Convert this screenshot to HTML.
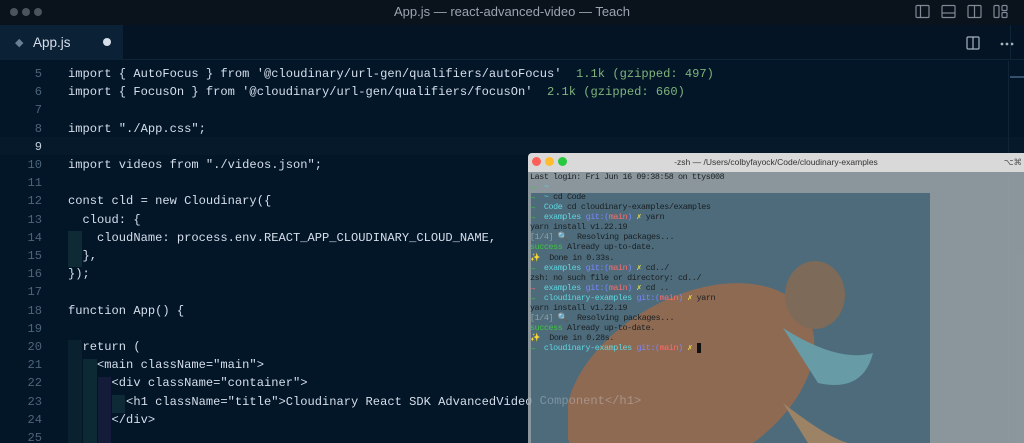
<!DOCTYPE html>
<html><head><meta charset="utf-8"><style>
*{margin:0;padding:0;box-sizing:border-box}
html,body{width:1024px;height:443px;overflow:hidden}
body{background:#021628;font-family:"Liberation Sans",sans-serif;position:relative}
.title{position:absolute;left:0;top:0;width:1024px;height:25px;background:#0a121c;color:#9aa5b1;font-size:13px;text-align:center;line-height:24px}
.dots span{position:absolute;top:8px;width:8px;height:8px;border-radius:50%;background:#4b535c}
.tabs{position:absolute;top:25px;left:0;width:1024px;height:35px;background:#041424;border-bottom:1px solid #0f2436}
.tab{position:absolute;left:0;top:0;width:123px;height:35px;background:#0b2236;color:#d6deeb;font-size:13.5px;line-height:36px;padding-left:33px}
.code{position:absolute;left:0;top:67px;width:1000px;height:376px;overflow:hidden;font-family:"Liberation Mono",monospace;font-size:12.1px;color:#d6deeb}
.ln{position:absolute;left:0;width:42px;text-align:right;color:#4d6479;white-space:pre}
.tx{position:absolute;left:68px;white-space:pre}
.g{color:#7fb37a}
.term{position:absolute;left:528px;top:153px;width:496px;height:290px;background:rgba(150,160,166,.93);border-radius:4px 0 0 0;overflow:hidden}
.tt{height:19px;background:#d9d9d9;color:#333;font-size:8.5px;text-align:center;line-height:18px;border-radius:4px 0 0 0}
.tt span{position:absolute;top:4px;width:9px;height:9px;border-radius:50%}
.tb{position:absolute;left:3px;top:40px;width:399px;height:250px;background:#4d6b7b}
.tl{position:absolute;left:2px;top:19px;font-family:"Liberation Mono",monospace;font-size:8.4px;line-height:10.06px;color:#1a1f22;white-space:pre;letter-spacing:-.4px}
.c{color:#5ed6e0}.b{color:#7b86ff}.r{color:#ff6b6b}.y{color:#e6d84a}.s{color:#3fc43f}.gr{color:#93a0a8}
</style></head><body>
<div class="title">App.js — react-advanced-video — Teach
<div class="dots"><span style="left:10px"></span><span style="left:22px"></span><span style="left:34px"></span></div>
<svg style="position:absolute;left:915px;top:4px" width="105" height="16" fill="none" stroke="#7f8a96" stroke-width="1.2">
<rect x="1" y="1.5" width="13" height="12" rx="1"/><line x1="5.5" y1="1.5" x2="5.5" y2="13.5"/>
<rect x="27" y="1.5" width="13" height="12" rx="1"/><line x1="27" y1="9" x2="40" y2="9"/>
<rect x="53" y="1.5" width="13" height="12" rx="1"/><line x1="59.5" y1="1.5" x2="59.5" y2="13.5"/>
<rect x="79" y="1.5" width="5" height="12" rx="1"/><rect x="87" y="1.5" width="5" height="5" rx="1"/><rect x="87" y="8.5" width="5" height="5" rx="1"/></svg>
</div>
<div class="tabs"><div class="tab"><span style="position:absolute;left:15px;top:0;color:#6a7f93;font-size:11px">◆</span>App.js<span style="position:absolute;left:103px;top:13px;width:8px;height:8px;border-radius:50%;background:#d6deeb"></span></div>
<svg style="position:absolute;left:966px;top:11px" width="50" height="14" fill="none" stroke="#a7b2bd" stroke-width="1.2"><rect x="1" y="1" width="12" height="12" rx="1"/><line x1="7" y1="1" x2="7" y2="13"/><circle cx="36" cy="8" r=".8" fill="#a7b2bd"/><circle cx="41" cy="8" r=".8" fill="#a7b2bd"/><circle cx="46" cy="8" r=".8" fill="#a7b2bd"/></svg>
<div style="position:absolute;left:1010px;top:0;width:1px;height:35px;background:#0f2436"></div></div>
<div style="position:absolute;left:0;top:137px;width:1024px;height:18px;background:#06192b"></div>
<div style="position:absolute;left:1008px;top:61px;width:16px;height:382px;border-left:1px solid #0f2436"></div>
<div style="position:absolute;left:1010px;top:76px;width:14px;height:2px;background:#34506a"></div>
<div style="position:absolute;left:68px;top:231px;width:14px;height:36px;background:#0d2a35"></div>
<div style="position:absolute;left:68px;top:340px;width:14px;height:103px;background:#0a2230"></div>
<div style="position:absolute;left:83px;top:359px;width:14px;height:84px;background:#0c2a33"></div>
<div style="position:absolute;left:98px;top:377px;width:13px;height:66px;background:#141c3a"></div>
<div style="position:absolute;left:112px;top:395px;width:13px;height:18px;background:#0e2a37"></div>
<div class="code">
<div class="ln" style="top:0">5</div><div class="tx" style="top:0">import { AutoFocus } from '@cloudinary/url-gen/qualifiers/autoFocus'  <span class="g">1.1k (gzipped: 497)</span></div>
<div class="ln" style="top:18.2px">6</div><div class="tx" style="top:18.2px">import { FocusOn } from '@cloudinary/url-gen/qualifiers/focusOn'  <span class="g">2.1k (gzipped: 660)</span></div>
<div class="ln" style="top:36.4px">7</div>
<div class="ln" style="top:54.6px">8</div><div class="tx" style="top:54.6px">import "./App.css";</div>
<div class="ln" style="top:72.8px;color:#c5d0db">9</div>
<div class="ln" style="top:91px">10</div><div class="tx" style="top:91px">import videos from "./videos.json";</div>
<div class="ln" style="top:109.2px">11</div>
<div class="ln" style="top:127.4px">12</div><div class="tx" style="top:127.4px">const cld = new Cloudinary({</div>
<div class="ln" style="top:145.6px">13</div><div class="tx" style="top:145.6px">  cloud: {</div>
<div class="ln" style="top:163.8px">14</div><div class="tx" style="top:163.8px">    cloudName: process.env.REACT_APP_CLOUDINARY_CLOUD_NAME,</div>
<div class="ln" style="top:182px">15</div><div class="tx" style="top:182px">  },</div>
<div class="ln" style="top:200.2px">16</div><div class="tx" style="top:200.2px">});</div>
<div class="ln" style="top:218.4px">17</div>
<div class="ln" style="top:236.6px">18</div><div class="tx" style="top:236.6px">function App() {</div>
<div class="ln" style="top:254.8px">19</div>
<div class="ln" style="top:273px">20</div><div class="tx" style="top:273px">  return (</div>
<div class="ln" style="top:291.2px">21</div><div class="tx" style="top:291.2px">    &lt;main className="main"&gt;</div>
<div class="ln" style="top:309.4px">22</div><div class="tx" style="top:309.4px">      &lt;div className="container"&gt;</div>
<div class="ln" style="top:327.6px">23</div><div class="tx" style="top:327.6px">        &lt;h1 className="title"&gt;Cloudinary React SDK AdvancedVideo Component&lt;/h1&gt;</div>
<div class="ln" style="top:345.8px">24</div><div class="tx" style="top:345.8px">      &lt;/div&gt;</div>
<div class="ln" style="top:364px">25</div>
</div>
<div class="term">
<div class="tt">-zsh — /Users/colbyfayock/Code/cloudinary-examples<span style="left:4px;background:#fe5f57"></span><span style="left:17px;background:#febc2e"></span><span style="left:30px;background:#28c840"></span><b style="position:absolute;right:2px;font-weight:normal;color:#555">⌥⌘</b></div>
<div class="tb"></div>
<svg style="position:absolute;left:40px;top:100px" width="360" height="190" opacity=".8">
<ellipse cx="122" cy="130" rx="135" ry="85" fill="#a06a48" transform="rotate(-30 122 130)"/>
<ellipse cx="247" cy="42" rx="30" ry="34" fill="#8a6a50"/>
<path d="M215 75 Q270 110 305 100 Q295 140 250 130Z" fill="#6ea8b0"/>
<path d="M215 150 Q260 185 280 190 L240 190Z" fill="#b08a60"/>
</svg>
<div style="position:absolute;left:-90px;top:241px;font-family:'Liberation Mono',monospace;font-size:12.1px;color:rgba(214,222,235,.35);white-space:pre">AdvancedVideo Component&lt;/h1&gt;</div>
<div class="tl">Last login: Fri Jun 16 09:38:58 on ttys008
<span class="s">→</span>  <span class="c">~</span>
<span class="s">→</span>  <span class="c">~</span> cd Code
<span class="s">→</span>  <span class="c">Code</span> cd cloudinary-examples/examples
<span class="s">→</span>  <span class="c">examples</span> <span class="b">git:(</span><span class="r">main</span><span class="b">)</span> <span class="y">✗</span> yarn
yarn install v1.22.19
<span class="gr">[1/4]</span> 🔍  Resolving packages...
<span class="s">success</span> Already up-to-date.
<span class="y">✨</span>  Done in 0.33s.
<span class="s">→</span>  <span class="c">examples</span> <span class="b">git:(</span><span class="r">main</span><span class="b">)</span> <span class="y">✗</span> cd../
zsh: no such file or directory: cd../
<span class="r">→</span>  <span class="c">examples</span> <span class="b">git:(</span><span class="r">main</span><span class="b">)</span> <span class="y">✗</span> cd ..
<span class="s">→</span>  <span class="c">cloudinary-examples</span> <span class="b">git:(</span><span class="r">main</span><span class="b">)</span> <span class="y">✗</span> yarn
yarn install v1.22.19
<span class="gr">[1/4]</span> 🔍  Resolving packages...
<span class="s">success</span> Already up-to-date.
<span class="y">✨</span>  Done in 0.28s.
<span class="s">→</span>  <span class="c">cloudinary-examples</span> <span class="b">git:(</span><span class="r">main</span><span class="b">)</span> <span class="y">✗</span> <span style="background:#111">&nbsp;</span></div>
</div>
</body></html>
